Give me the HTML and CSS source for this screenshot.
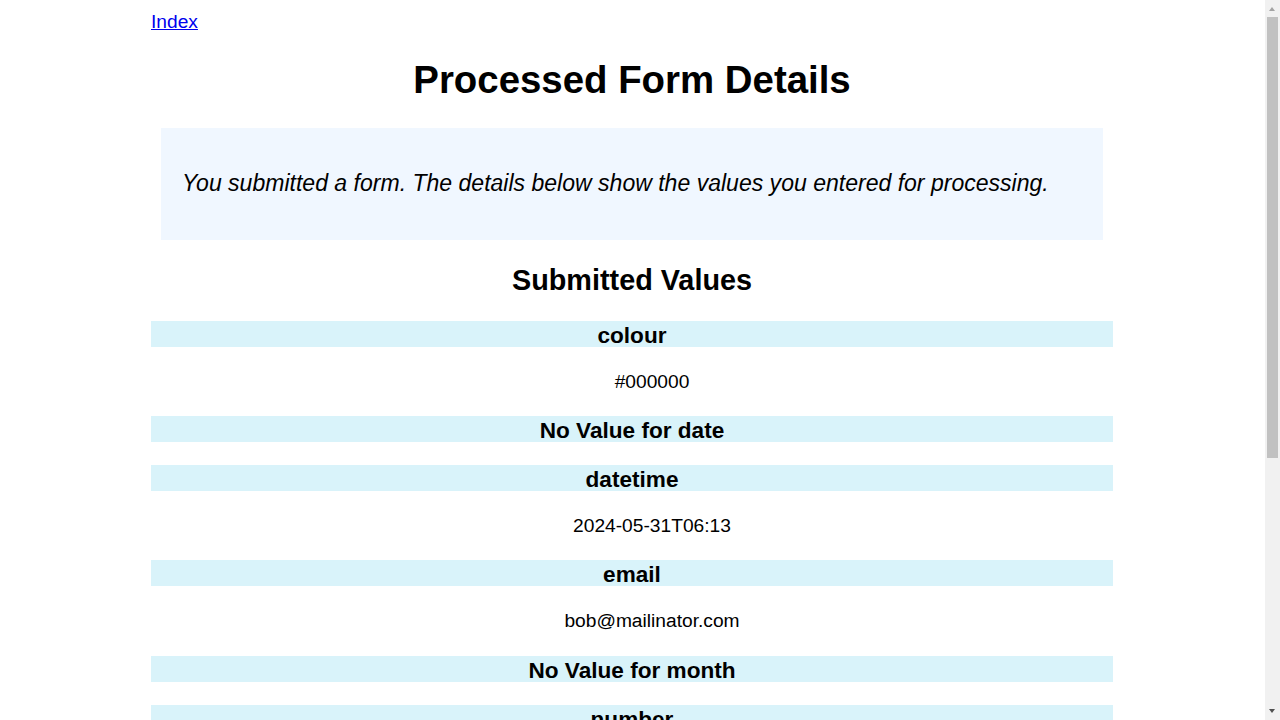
FILE: index.html
```html
<!DOCTYPE html>
<html lang="en">
<head>
<meta charset="utf-8">
<title>Processed Form Details</title>
<link rel="stylesheet" href="styles.css">
</head>
<body>
<div class="page">
  <div class="nav"><a href="#">Index</a></div>
  <h1 class="title">Processed Form Details</h1>
  <div class="explanation">
    <p>You submitted a form. The details below show the values you entered for processing.</p>
  </div>
  <h2 class="subtitle">Submitted Values</h2>
  <dl class="results">
    <dt class="field-name">colour</dt>
    <dd class="field-value">#000000</dd>
    <dt class="field-name">No Value for date</dt>
    <dt class="field-name">datetime</dt>
    <dd class="field-value">2024-05-31T06:13</dd>
    <dt class="field-name">email</dt>
    <dd class="field-value">bob@mailinator.com</dd>
    <dt class="field-name">No Value for month</dt>
    <dt class="field-name">number</dt>
    <dd class="field-value">42</dd>
    <dt class="field-name">No Value for password</dt>
    <dt class="field-name">No Value for search</dt>
    <dt class="field-name">No Value for tel</dt>
    <dt class="field-name">text</dt>
    <dd class="field-value">some text</dd>
    <dt class="field-name">No Value for time</dt>
    <dt class="field-name">No Value for url</dt>
  </dl>
</div>
<div class="scrollbar" aria-hidden="true">
  <span class="arrow arrow-up"></span>
  <span class="thumb"></span>
  <span class="arrow arrow-down"></span>
</div>
</body>
</html>
```
FILE: styles.css
```css
html, body {
  background: #ffffff;
}
body {
  margin: 8px 24px 8px 8px;
  font-family: "Liberation Sans", Arial, sans-serif;
  font-size: 19.2px;
  color: #000000;
}
.page {
  width: 962px;
  margin: 0 auto;
}
.nav {
  padding-top: 2.6px;
}
.nav a {
  color: #0000ee;
  text-decoration: underline;
}
.title {
  font-size: 38.4px;
  font-weight: bold;
  text-align: center;
  margin: 25.7px 0;
}
.explanation {
  background: #f0f7ff;
  margin: 0 10px;
  padding: 19.5px 21px;
}
.explanation p {
  margin: 23px 0;
  font-size: 23.04px;
  font-style: italic;
}
.subtitle {
  font-size: 28.8px;
  font-weight: bold;
  text-align: center;
  margin: 23.8px 0 24px;
}
.results {
  margin: 0;
}
.field-name {
  background: #d9f3fa;
  font-size: 22.6px;
  line-height: 23px;
  padding-top: 3px;
  font-weight: bold;
  text-align: center;
  margin: 23.3px 0 0;
}
.field-value {
  margin: 23.9px 0 22px 40px;
  text-align: center;
}

/* browser-style vertical scrollbar */
.scrollbar {
  position: fixed;
  top: 0;
  right: 0;
  width: 15px;
  height: 100vh;
  background: #f1f1f1;
}
.thumb {
  position: absolute;
  top: 17px;
  left: 2px;
  width: 11px;
  height: 441px;
  background: #c1c1c1;
}
.arrow {
  position: absolute;
  left: 4px;
  width: 0;
  height: 0;
  border-left: 3.5px solid transparent;
  border-right: 3.5px solid transparent;
}
.arrow-up {
  top: 7px;
  border-bottom: 4px solid #a3a3a3;
}
.arrow-down {
  bottom: 7px;
  border-top: 4px solid #505050;
}
```
